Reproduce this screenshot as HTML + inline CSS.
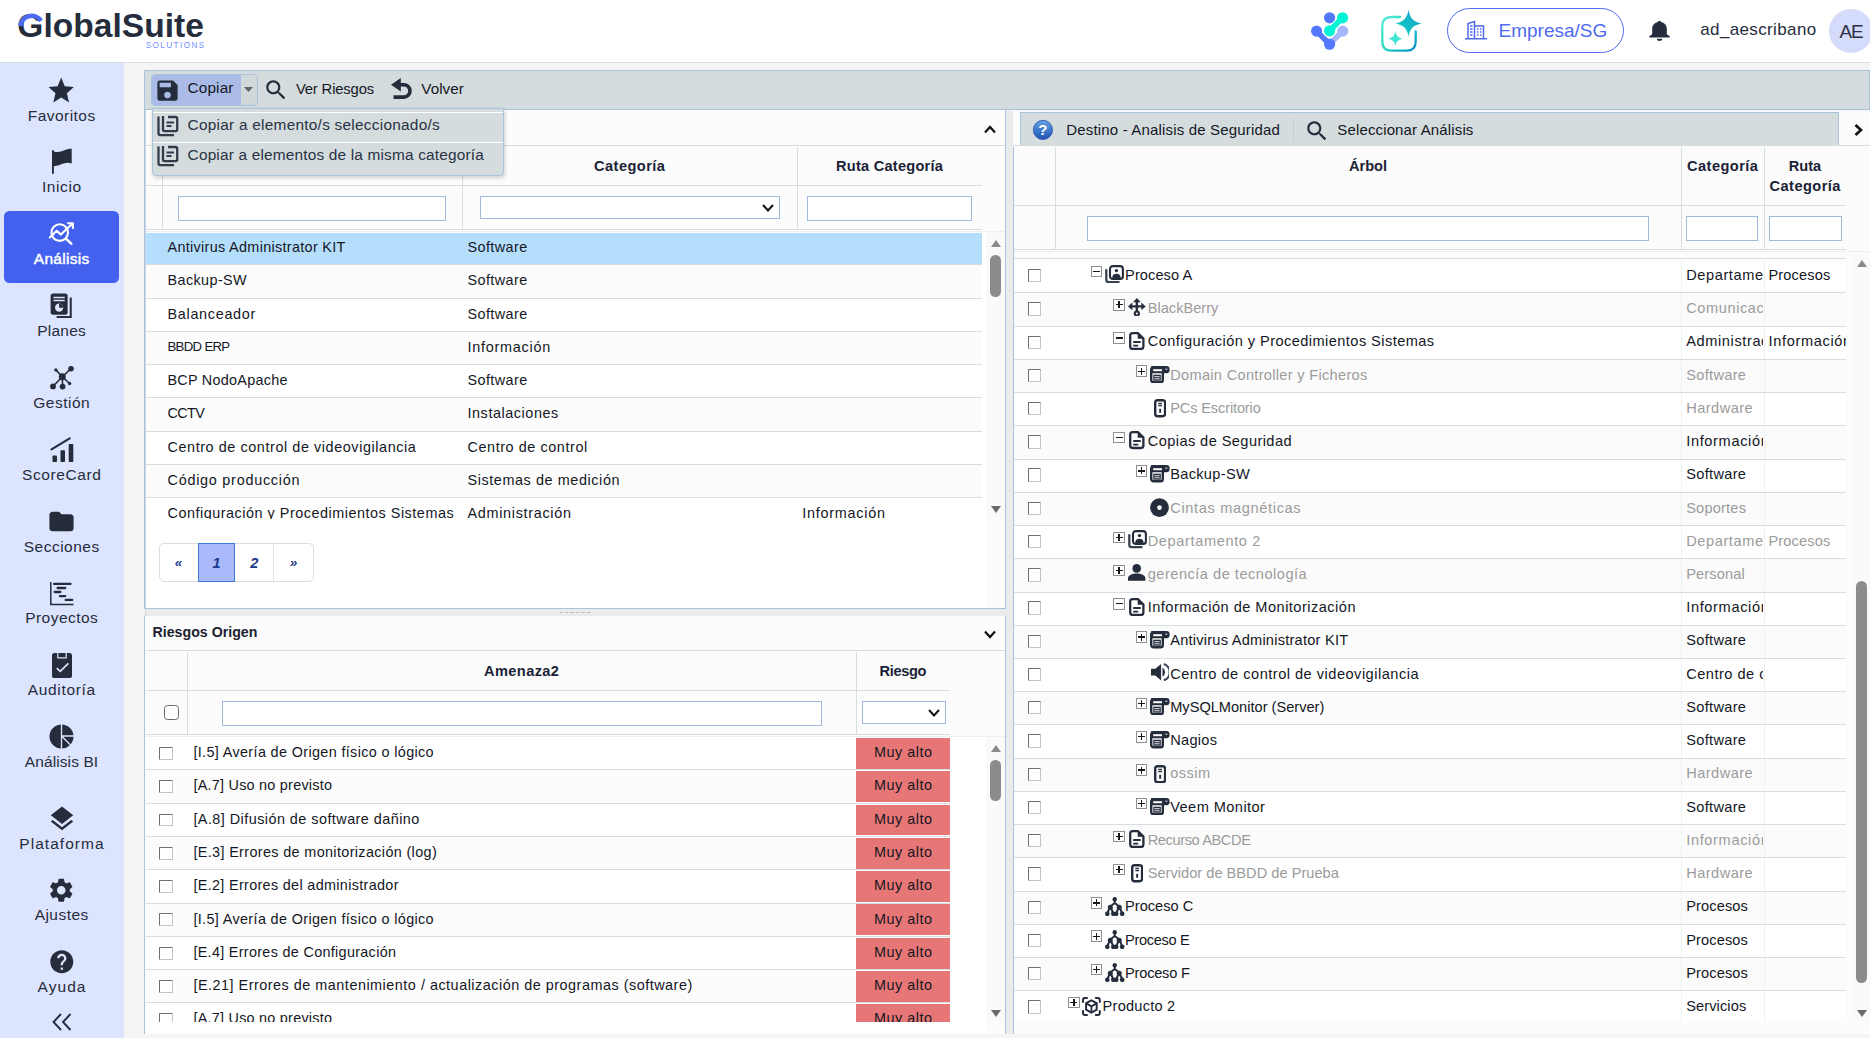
<!DOCTYPE html><html lang="es"><head><meta charset="utf-8"><title>GlobalSuite</title>
<style>
html,body{margin:0;padding:0}
body{width:1870px;height:1038px;overflow:hidden;background:#f5f5f5;font-family:"Liberation Sans",sans-serif;color:#14171f;position:relative}
div,span{box-sizing:border-box}
.abs{position:absolute}
svg{display:block}
#hdr{position:absolute;left:0;top:0;width:1870px;height:63px;background:#fff;border-bottom:1px solid #d5dcdd}
#side{position:absolute;left:0;top:63px;width:124px;height:975px;background:#dde4fd}
.si{position:absolute;left:4px;width:115px;height:72px;border-radius:5.5px}
.si.act{background:#4361ee}
.t{position:absolute;white-space:nowrap;line-height:20px}
.hl{position:absolute;background:#d6dee0;height:1px}
.vl{position:absolute;background:#d6dee0;width:1px}
.inp{position:absolute;background:#fff;border:1px solid #9fbbdc;box-sizing:border-box}
.cb{position:absolute;width:13.5px;height:12.8px;border:1.4px solid;border-color:#707070 #c4c4c4 #c4c4c4 #707070;background:#fff;box-sizing:border-box;border-radius:1px}
.red{position:absolute;background:#e77676}
.ex{position:absolute;width:11.5px;height:11.5px;border:1px solid #8f8f8f;background:#fff;box-sizing:border-box}
.ex i{position:absolute;left:1.3px;top:4.1px;width:7px;height:1.3px;background:#1a1a1a}
.ex b{position:absolute;left:4.1px;top:1.3px;width:1.3px;height:7px;background:#1a1a1a}
</style></head><body>
<div id="hdr">
<div class="t" style="left:17.3px;top:15.99px;font-size:33.5px;letter-spacing:0.04px;color:#252d3d;font-weight:bold;line-height:20px;">GlobalSuite</div>
<svg class="abs" style="left:17.5px;top:12.3px" width="26" height="15" viewBox="0 0 26 15"><path d="M2.300 14A11.300 11.300 0 0 1 23 9" fill="none" stroke="#4d6cf5" stroke-width="4.500"/></svg>
<div class="t" style="left:145.7px;top:35.76px;font-size:8.2px;letter-spacing:1.40px;color:#7590ff;">SOLUTIONS</div>
<svg class="abs" style="left:1308px;top:8px" width="44" height="44" viewBox="1308 8 44 44">
<g stroke-linecap="round" fill="none" stroke-width="5.600">
<path d="M1342.700 31.100L1329.600 44.200" stroke="#a5b7fb"/><circle cx="1342.700" cy="31.100" r="5.600" fill="#a5b7fb" stroke="none"/>
<path d="M1316.600 31.100L1329.600 44.200" stroke="#5478fb"/><circle cx="1316.600" cy="31.100" r="5.600" fill="#5478fb" stroke="none"/><circle cx="1329.600" cy="44.200" r="5.600" fill="#5478fb" stroke="none"/>
<circle cx="1329.600" cy="17.800" r="5.600" fill="#5478fb" stroke="none"/>
<path d="M1342.500 17.800L1329.600 30.800" stroke="#fff" stroke-width="7.500"/>
<circle cx="1329.600" cy="30.800" r="6.800" fill="#fff" stroke="none"/>
<path d="M1342.500 17.800L1329.600 30.800" stroke="#00f5d4"/><circle cx="1342.500" cy="17.800" r="5.600" fill="#00f5d4" stroke="none"/><circle cx="1329.600" cy="30.800" r="5.600" fill="#00f5d4" stroke="none"/>
</g></svg>
<svg class="abs" style="left:1378px;top:6px" width="48" height="50" viewBox="1378 6 48 50">
<defs><linearGradient id="g1" x1="0" y1="0" x2="1" y2="1"><stop offset="0" stop-color="#5feadb"/><stop offset=".5" stop-color="#1fd8c0"/><stop offset="1" stop-color="#0a8bcb"/></linearGradient>
<linearGradient id="g2" x1="0" y1="1" x2="1" y2="0"><stop offset="0" stop-color="#12dcc0"/><stop offset="1" stop-color="#1797cd"/></linearGradient></defs>
<path d="M1400 17H1391.500C1385.500 17 1382.300 20.200 1382.300 26v15.500c0 5.800 3.200 9.200 9.200 9.200h15c6 0 9.200-3.400 9.200-9.200V31.300" fill="none" stroke="url(#g1)" stroke-width="2.300" stroke-linecap="round"/>
<path d="M1408.500 9.700c1.300 8.200 4.600 12 13.100 13.700-8.500 1.700-11.800 5.300-13.100 13.300-1.300-8-4.600-11.600-13.100-13.300 8.500-1.700 11.800-5.500 13.100-13.700z" fill="url(#g2)"/>
<path d="M1395.400 31c.7 4.600 2.600 6.700 7.300 7.700-4.700 1-6.600 3-7.300 7.500-.7-4.500-2.600-6.500-7.300-7.500 4.700-1 6.600-3.100 7.300-7.700z" fill="#43e6d2"/>
</svg>
<div class="abs" style="left:1447px;top:8px;width:177px;height:45px;border:1.5px solid #4f6bf0;border-radius:23px"></div>
<svg class="abs" style="left:1464px;top:19px" width="24" height="22" viewBox="0 0 24 22" fill="none" stroke="#4f6bf0" stroke-width="1.500">
<path d="M4 19V4.500l6.500-2V19M10.500 7h9V19M1 19.800h22"/><path d="M6 7h2.500M6 10h2.500M6 13h2.500M6 16h2.500M13 10h1.500M16 10h1.500M13 13h1.500M16 13h1.500M13 16h1.500M16 16h1.500" stroke-width="1.300"/></svg>
<div class="t" style="left:1498.6px;top:20.72px;font-size:19px;letter-spacing:-0.02px;color:#4f6bf0;">Empresa/SG</div>
<svg class="abs" style="left:1645.500px;top:19.300px" width="27" height="23.500" viewBox="0 0 24 24" preserveAspectRatio="none" fill="#252d3d"><path d="M12 22.500c1.300 0 2.400-.9 2.400-2.300H9.600c0 1.400 1.100 2.300 2.400 2.300zM18.500 15.500v-5.500c0-3.300-1.900-6-4.800-6.700C13.400 2.500 12.800 2 12 2s-1.400.5-1.700 1.300C7.400 4 5.500 6.700 5.500 10v5.500L3 17.500c-.3.300-.2 1.500.5 1.500h17c.7 0 .8-1.200.5-1.500z"/></svg>
<div class="t" style="left:1700.3px;top:20.31px;font-size:17px;letter-spacing:0.36px;color:#252d3d;">ad_aescribano</div>
<div class="abs" style="left:1829px;top:9px;width:44px;height:44px;border-radius:22px;background:#d5dbfb"></div>
<div class="t" style="left:1839.6px;top:21.65px;font-size:18.9px;letter-spacing:-1.30px;color:#2a3142;">AE</div>
</div>
<div id="side">
<div class="abs" style="left:46.3px;top:12.1px"><svg width="30.400" height="31.400" viewBox="0 0 24 24" preserveAspectRatio="none" fill="#252d3d"><path d="M12 17.27L18.18 21l-1.64-7.03L22 9.24l-7.19-.61L12 2 9.19 8.63 2 9.24l5.46 4.73L5.82 21z"/></svg></div>
<div class="t" style="left:0.0px;top:42.53px;font-size:15.5px;letter-spacing:0.46px;color:#252d3d;width:123px;text-align:center;text-indent:0.46px;">Favoritos</div>
<div class="abs" style="left:47.5px;top:85.1px"><svg width="28" height="28" viewBox="47.50 148.13 28 28" fill="#252d3d"><path d="M51.500 150.400V174h1.900v-7.700C57 166 60 164.700 63 163.600c3-1 6-.9 8.200 0V148.900c-3.200-.5-6.200 1-9.200 2.300-3.300 1.300-6.600 1.200-8.600.4v-1.200z"/></svg></div>
<div class="t" style="left:0.0px;top:114.36px;font-size:15.5px;letter-spacing:0.60px;color:#252d3d;width:123px;text-align:center;text-indent:0.60px;">Inicio</div>
<div class="si act" style="top:147.6px"></div>
<div class="abs" style="left:47.0px;top:156.0px"><svg width="28" height="28" viewBox="47.500 220 28 28" fill="none" stroke="#fff" stroke-width="2.100" stroke-linecap="round" stroke-linejoin="round"><circle cx="60.200" cy="233.600" r="8.300"/><path d="M66.500 239.800l5.300 4.800" stroke-width="2.500"/><path d="M50.300 238.600l6.900-6.800 4.200 3.800L72.800 224.800M68.600 224.300h4.800v4.800"/></svg></div>
<div class="t" style="left:0.0px;top:186.19px;font-size:15.5px;letter-spacing:0.28px;color:#fff;width:123px;text-align:center;text-indent:0.28px;-webkit-text-stroke:0.45px #fff;">Análisis</div>
<div class="abs" style="left:46.0px;top:227.8px"><svg width="30" height="30" viewBox="0 0 24 24" fill="#252d3d"><path d="M5.500 2h10c1 0 1.800.8 1.800 1.800v13.400c0 1-.8 1.800-1.800 1.800h-10c-1 0-1.800-.8-1.800-1.800V3.800C3.700 2.800 4.500 2 5.500 2z"/><path d="M19 5.200h1.600v16.300H8.500v-1.600H19z"/><path d="M6 4.500h9v1.200H6zM6 7h9v1.200H6z" fill="#dde4fd"/><circle cx="10.500" cy="13.300" r="3.300" fill="#dde4fd"/><path d="M10.500 13.300V10a3.300 3.300 0 0 1 3.300 3.300z" fill="#252d3d"/></svg></div>
<div class="t" style="left:0.0px;top:258.02px;font-size:15.5px;letter-spacing:0.24px;color:#252d3d;width:123px;text-align:center;text-indent:0.24px;">Planes</div>
<div class="abs" style="left:47.5px;top:300.6px"><svg width="28" height="28" viewBox="47.50 363.62 28 28" fill="#252d3d" stroke="#252d3d" stroke-width="1.600"><path d="M61.800 376.400L70.500 368.300M61.800 376.400L55.400 369.500M61.800 376.400L69.100 383.100M61.800 376.400L62.100 386.200M61.800 376.400L52.500 386" fill="none"/><circle cx="61.800" cy="376.400" r="3.500" stroke="none"/><circle cx="70.500" cy="368.300" r="2.800" stroke="none"/><circle cx="55.400" cy="369.500" r="1.700" stroke="none"/><circle cx="69.100" cy="383.100" r="1.700" stroke="none"/><circle cx="62.100" cy="386.200" r="2.900" stroke="none"/><circle cx="52.500" cy="386" r="2.900" stroke="none"/></svg></div>
<div class="t" style="left:0.0px;top:329.85px;font-size:15.5px;letter-spacing:0.51px;color:#252d3d;width:123px;text-align:center;text-indent:0.51px;">Gestión</div>
<div class="abs" style="left:47.5px;top:373.2px"><svg width="28" height="28" viewBox="47.50 435.45 28 28" fill="#252d3d"><rect x="52" y="455" width="4.500" height="6.500" rx=".8"/><rect x="60" y="449.800" width="4.500" height="11.700" rx=".8"/><rect x="68.200" y="443.400" width="4.600" height="18.100" rx=".8"/><path d="M51 448.800L69.200 437.800" stroke="#252d3d" stroke-width="2.100" stroke-linecap="round"/></svg></div>
<div class="t" style="left:0.0px;top:401.68px;font-size:15.5px;letter-spacing:0.59px;color:#252d3d;width:123px;text-align:center;text-indent:0.59px;">ScoreCard</div>
<div class="abs" style="left:47.0px;top:443.8px"><svg width="29" height="29" viewBox="0 0 24 24" fill="#252d3d" ><path d="M10 4H4.500C3.100 4 2 5.100 2 6.500v11C2 18.900 3.100 20 4.500 20h15c1.400 0 2.500-1.100 2.500-2.500v-9C22 7.100 20.900 6 19.500 6H12z"/></svg></div>
<div class="t" style="left:0.0px;top:473.51px;font-size:15.5px;letter-spacing:0.49px;color:#252d3d;width:123px;text-align:center;text-indent:0.49px;">Secciones</div>
<div class="abs" style="left:47.5px;top:516.1px"><svg width="28" height="28" viewBox="47.50 579.11 28 28" fill="none" stroke="#252d3d"><path d="M50.300 582v22.600h22.700" stroke-width="1.500"/><path d="M53.600 584H70M57.100 588.100h7.600M54.200 592.100h5.700M59.400 596.200h5.300M65.200 600h6.500" stroke-width="2.300" stroke-linecap="round"/></svg></div>
<div class="t" style="left:0.0px;top:545.34px;font-size:15.5px;letter-spacing:0.46px;color:#252d3d;width:123px;text-align:center;text-indent:0.46px;">Proyectos</div>
<div class="abs" style="left:51.5px;top:590.1px"><svg width="20" height="25" viewBox="0 0 20 25"><rect x="0" y="0" width="20" height="25" rx="2.600" fill="#252d3d"/><path d="M5.800 0v4.800h8.400V0" fill="none" stroke="#dde4fd" stroke-width="1.200"/><path d="M4.800 15.200l3.400 3.200 8.200-8" fill="none" stroke="#dde4fd" stroke-width="1.700"/></svg></div>
<div class="t" style="left:0.0px;top:617.17px;font-size:15.5px;letter-spacing:0.68px;color:#252d3d;width:123px;text-align:center;text-indent:0.68px;">Auditoría</div>
<div class="abs" style="left:49.0px;top:661.3px"><svg width="25" height="25" viewBox="0 0 25 25"><circle cx="12.500" cy="12.500" r="12" fill="#252d3d"/><path d="M12.500 0v25M12.500 12h12.500M13 12.500l8.500 8.500" stroke="#dde4fd" stroke-width="1.300" fill="none"/></svg></div>
<div class="t" style="left:0.0px;top:689.00px;font-size:15.5px;letter-spacing:0.09px;color:#252d3d;width:123px;text-align:center;text-indent:0.09px;">Análisis BI</div>
<div class="abs" style="left:46.5px;top:740.6px"><svg width="30" height="30" viewBox="0 0 24 24" fill="#252d3d" ><path d="M11.990 18.540l-7.370-5.730L3 14.070l9 7 9-7-1.630-1.270-7.380 5.740zM12 16l7.360-5.730L21 9l-9-7-9 7 1.630 1.270L12 16z"/></svg></div>
<div class="t" style="left:0.0px;top:770.53px;font-size:15.5px;letter-spacing:1.04px;color:#252d3d;width:123px;text-align:center;text-indent:1.04px;">Plataforma</div>
<div class="abs" style="left:47.2px;top:813.2px"><svg width="28.5" height="28.5" viewBox="0 0 24 24" fill="#252d3d" ><path d="M19.140 12.940c.040-.3.060-.610.060-.940 0-.320-.020-.640-.070-.940l2.030-1.580c.180-.140.230-.410.120-.610l-1.920-3.320c-.120-.220-.370-.290-.590-.220l-2.390.960c-.5-.380-1.030-.7-1.620-.940l-.360-2.540c-.040-.240-.240-.410-.480-.410h-3.840c-.240 0-.430.170-.470.410l-.360 2.540c-.590.240-1.130.570-1.620.940l-2.390-.960c-.220-.080-.470 0-.590.220L2.740 8.870c-.120.210-.080.470.120.610l2.030 1.580c-.050.3-.090.630-.090.940s.020.640.070.940l-2.030 1.580c-.180.140-.230.410-.120.610l1.920 3.320c.120.220.370.290.590.220l2.390-.960c.5.380 1.030.7 1.620.940l.360 2.540c.050.240.240.410.480.410h3.840c.240 0 .440-.170.470-.410l.360-2.540c.590-.240 1.130-.560 1.620-.940l2.390.960c.220.080.470 0 .590-.220l1.920-3.320c.120-.220.070-.470-.120-.610l-2.010-1.580zM12 15.600c-1.980 0-3.600-1.620-3.600-3.600s1.620-3.600 3.600-3.600 3.600 1.620 3.600 3.600-1.620 3.600-3.600 3.600z"/></svg></div>
<div class="t" style="left:0.0px;top:842.36px;font-size:15.5px;letter-spacing:0.48px;color:#252d3d;width:123px;text-align:center;text-indent:0.48px;">Ajustes</div>
<div class="abs" style="left:47.7px;top:885.2px"><svg width="27.6" height="27.6" viewBox="0 0 24 24" fill="#252d3d" ><path d="M12 2C6.480 2 2 6.480 2 12s4.480 10 10 10 10-4.480 10-10S17.520 2 12 2zm1 17h-2v-2h2v2zm2.070-7.750l-.9.920C13.450 12.900 13 13.500 13 15h-2v-.5c0-1.100.450-2.100 1.170-2.830l1.240-1.260c.370-.360.590-.860.590-1.410 0-1.100-.9-2-2-2s-2 .9-2 2H8c0-2.210 1.790-4 4-4s4 1.790 4 4c0 .880-.360 1.680-.930 2.250z"/></svg></div>
<div class="t" style="left:0.0px;top:914.19px;font-size:15.5px;letter-spacing:1.06px;color:#252d3d;width:123px;text-align:center;text-indent:1.06px;">Ayuda</div>
<svg class="abs" style="left:51px;top:950.300px" width="22" height="18" viewBox="0 0 22 18" fill="none" stroke="#252d3d" stroke-width="1.900"><path d="M10 1L2.500 9l7.500 8M19.500 1L12 9l7.500 8"/></svg>
</div>
<div class="abs" style="left:144px;top:70px;width:1726px;height:40px;background:#d4dcde;border:1px solid #a9c3df"></div>
<div class="abs" style="left:151px;top:74px;width:107px;height:32px;background:#d0d8da;border:1px solid #a9c3df;border-radius:4px"></div>
<div class="abs" style="left:152px;top:75px;width:89px;height:30px;background:#abbbe8;border-radius:3px 0 0 3px"></div>
<div class="abs" style="left:153.700px;top:76.600px"><svg width="27" height="27" viewBox="0 0 24 24" fill="#252d3d" ><path d="M17 3H5c-1.110 0-2 .9-2 2v14c0 1.100.890 2 2 2h14c1.100 0 2-.9 2-2V7l-4-4zm-5 16c-1.660 0-3-1.340-3-3s1.340-3 3-3 3 1.340 3 3-1.340 3-3 3zm3-10H5V5h10v4z"/></svg></div>
<div class="t" style="left:187.6px;top:77.70px;font-size:15.3px;letter-spacing:0.15px;">Copiar</div>
<svg class="abs" style="left:244px;top:87px" width="9" height="5" viewBox="0 0 9 5"><path d="M0 0h9L4.500 5z" fill="#5b6470"/></svg>
<div class="abs" style="left:263px;top:76.500px"><svg width="26" height="26" viewBox="0 0 24 24" fill="#252d3d" ><path d="M15.500 14h-.790l-.280-.270C15.410 12.590 16 11.110 16 9.500 16 5.910 13.090 3 9.500 3S3 5.910 3 9.500 5.910 16 9.500 16c1.610 0 3.090-.590 4.230-1.570l.270.280v.790l5 4.990L20.490 19l-4.990-5zm-6 0C7.010 14 5 11.990 5 9.500S7.010 5 9.500 5 14 7.010 14 9.500 11.990 14 9.500 14z"/></svg></div>
<div class="t" style="left:295.9px;top:79.17px;font-size:14.8px;letter-spacing:-0.15px;">Ver Riesgos</div>
<svg class="abs" style="left:390.800px;top:78.400px" width="22" height="22" viewBox="0 0 22 22" fill="none" stroke="#252d3d" stroke-width="3.600"><path d="M7 6.700h5.800a6.200 6.200 0 0 1 0 12.400H2.500"/><path d="M0 6.700L9.800 0v13.400z" fill="#252d3d" stroke="none"/></svg>
<div class="t" style="left:421.3px;top:79.00px;font-size:15.3px;letter-spacing:0.01px;">Volver</div>
<div class="abs" style="left:144px;top:110px;width:862px;height:499px;background:#fcfcfc;border-left:1px solid #a9c3df;border-right:1px solid #a9c3df;border-bottom:1px solid #a9c3df"></div>
<div class="vl" style="left:145px;top:110px;height:924px;background:#cbd8e2"></div>
<div class="abs" style="left:146px;top:232px;width:840px;height:376px;background:#fff"></div>
<div class="abs" style="left:986px;top:232px;width:19px;height:287px;background:#fafafa"></div>
<svg class="abs" style="left:984px;top:124.500px" width="12" height="9" viewBox="0 0 12 9" fill="none" stroke="#111" stroke-width="2.200"><path d="M1 7.500L6 2l5 5.500"/></svg>
<div class="hl" style="left:146px;top:145px;width:859px"></div>
<div class="vl" style="left:162px;top:147px;height:82px"></div>
<div class="vl" style="left:462px;top:147px;height:82px"></div>
<div class="vl" style="left:797px;top:147px;height:82px"></div>
<div class="hl" style="left:146px;top:185px;width:836px"></div>
<div class="hl" style="left:146px;top:229px;width:836px"></div>
<div class="hl" style="left:146px;top:231px;width:859px;background:#edf0f1"></div>
<div class="t" style="left:462.0px;top:155.54px;font-size:14.6px;letter-spacing:0.46px;color:#1b2236;font-weight:bold;width:335px;text-align:center;text-indent:0.46px;">Categoría</div>
<div class="t" style="left:797.0px;top:155.54px;font-size:14.6px;letter-spacing:0.23px;color:#1b2236;font-weight:bold;width:185px;text-align:center;text-indent:0.23px;">Ruta Categoría</div>
<div class="inp" style="left:178px;top:196px;width:268px;height:25px"></div>
<div class="inp" style="left:480px;top:196px;width:300px;height:23px"></div>
<svg class="abs" style="left:762px;top:204px" width="12" height="8" viewBox="0 0 12 8" fill="none" stroke="#111" stroke-width="2"><path d="M1 1l5 5.500L11 1"/></svg>
<div class="inp" style="left:807px;top:196px;width:165px;height:25px"></div>
<div class="abs" style="left:146px;top:232px;width:836px;height:286.70000000000005px;overflow:hidden">
<div class="abs" style="left:0;top:1.17px;width:836px;height:31.23px;background:#b5defd"></div>
<div class="t" style="left:21.5px;top:5.18px;font-size:14.4px;letter-spacing:0.32px;">Antivirus Administrator KIT</div>
<div class="t" style="left:321.5px;top:5.18px;font-size:14.4px;letter-spacing:0.42px;">Software</div>
<div class="hl" style="left:0;top:32.40px;width:836px"></div>
<div class="abs" style="left:0;top:33.40px;width:836px;height:32.23px;background:#fcfcfc"></div>
<div class="t" style="left:21.5px;top:38.41px;font-size:14.4px;letter-spacing:0.40px;">Backup-SW</div>
<div class="t" style="left:321.5px;top:38.41px;font-size:14.4px;letter-spacing:0.42px;">Software</div>
<div class="hl" style="left:0;top:65.63px;width:836px"></div>
<div class="t" style="left:21.5px;top:71.64px;font-size:14.4px;letter-spacing:0.70px;">Balanceador</div>
<div class="t" style="left:321.5px;top:71.64px;font-size:14.4px;letter-spacing:0.42px;">Software</div>
<div class="hl" style="left:0;top:98.86px;width:836px"></div>
<div class="abs" style="left:0;top:99.86px;width:836px;height:32.23px;background:#fcfcfc"></div>
<div class="t" style="left:21.5px;top:105.29px;font-size:13.2px;letter-spacing:-0.68px;">BBDD ERP</div>
<div class="t" style="left:321.5px;top:104.87px;font-size:14.4px;letter-spacing:0.75px;">Información</div>
<div class="hl" style="left:0;top:132.09px;width:836px"></div>
<div class="t" style="left:21.5px;top:138.10px;font-size:14.4px;letter-spacing:0.26px;">BCP NodoApache</div>
<div class="t" style="left:321.5px;top:138.10px;font-size:14.4px;letter-spacing:0.42px;">Software</div>
<div class="hl" style="left:0;top:165.32px;width:836px"></div>
<div class="abs" style="left:0;top:166.32px;width:836px;height:32.23px;background:#fcfcfc"></div>
<div class="t" style="left:21.5px;top:171.33px;font-size:14.4px;letter-spacing:-0.63px;">CCTV</div>
<div class="t" style="left:321.5px;top:171.33px;font-size:14.4px;letter-spacing:0.56px;">Instalaciones</div>
<div class="hl" style="left:0;top:198.55px;width:836px"></div>
<div class="t" style="left:21.5px;top:204.56px;font-size:14.4px;letter-spacing:0.58px;">Centro de control de videovigilancia</div>
<div class="t" style="left:321.5px;top:204.56px;font-size:14.4px;letter-spacing:0.58px;">Centro de control</div>
<div class="hl" style="left:0;top:231.78px;width:836px"></div>
<div class="abs" style="left:0;top:232.78px;width:836px;height:32.23px;background:#fcfcfc"></div>
<div class="t" style="left:21.5px;top:237.79px;font-size:14.4px;letter-spacing:0.75px;">Código producción</div>
<div class="t" style="left:321.5px;top:237.79px;font-size:14.4px;letter-spacing:0.59px;">Sistemas de medición</div>
<div class="hl" style="left:0;top:265.01px;width:836px"></div>
<div class="t" style="left:21.5px;top:271.02px;font-size:14.4px;letter-spacing:0.52px;">Configuración y Procedimientos Sistemas</div>
<div class="t" style="left:321.5px;top:271.02px;font-size:14.4px;letter-spacing:0.70px;">Administración</div>
<div class="t" style="left:656.3px;top:271.02px;font-size:14.4px;letter-spacing:0.75px;">Información</div>
</div>
<svg class="abs" style="left:990.5px;top:240.4px" width="10" height="7" viewBox="0 0 10 7"><path d="M0 7L5 0l5 7z" fill="#8a8a8a"/></svg>
<svg class="abs" style="left:990.5px;top:506px" width="10" height="7" viewBox="0 0 10 7"><path d="M0 0L5 7l5-7z" fill="#6a6a6a"/></svg>
<div class="abs" style="left:990.1px;top:254.9px;width:10.8px;height:42.099999999999994px;border-radius:5.4px;background:#8b8b8b"></div>
<div class="abs" style="left:159px;top:543px;width:155px;height:39px;border:1px solid #dddddd;border-radius:5px;background:#fff"></div>
<div class="abs" style="left:198px;top:543px;width:37px;height:39px;background:#a9b9fb;border:1px solid #3f78d8"></div>
<div class="vl" style="left:273px;top:544px;height:37px;background:#e2e2e2"></div>
<div class="t" style="left:163.5px;top:553.12px;font-size:13.5px;color:#1d3a8a;font-weight:bold;font-style:italic;width:30px;text-align:center;">«</div>
<div class="t" style="left:201.5px;top:552.78px;font-size:14.5px;color:#1d3a8a;font-weight:bold;font-style:italic;width:30px;text-align:center;">1</div>
<div class="t" style="left:239.3px;top:552.78px;font-size:14.5px;color:#1d3a8a;font-weight:bold;font-style:italic;width:30px;text-align:center;">2</div>
<div class="t" style="left:278.6px;top:553.12px;font-size:13.5px;color:#1d3a8a;font-weight:bold;font-style:italic;width:30px;text-align:center;">»</div>
<div class="abs" style="left:146px;top:609px;width:860px;height:7px;background:#ebebeb"></div>
<div class="abs" style="left:560px;top:612px;width:30px;height:0;border-top:1px dashed #b8b8b8"></div>
<div class="abs" style="left:1009px;top:595px;width:0;height:30px;border-left:1px dashed #b9c6d8"></div>
<div class="abs" style="left:144px;top:616px;width:862px;height:418px;background:#fcfcfc;border-left:1px solid #a9c3df;border-right:1px solid #a9c3df"></div>
<div class="t" style="left:152.5px;top:622.28px;font-size:14.2px;color:#1d2230;font-weight:bold;">Riesgos Origen</div>
<svg class="abs" style="left:984px;top:630px" width="12" height="9" viewBox="0 0 12 9" fill="none" stroke="#111" stroke-width="2.200"><path d="M1 1.500L6 7l5-5.500"/></svg>
<div class="hl" style="left:146px;top:650px;width:859px"></div>
<div class="vl" style="left:187px;top:652px;height:83px"></div>
<div class="vl" style="left:856px;top:652px;height:83px"></div>
<div class="hl" style="left:146px;top:690px;width:804px"></div>
<div class="hl" style="left:146px;top:734px;width:804px"></div>
<div class="abs" style="left:146px;top:737px;width:840px;height:297px;background:#fff"></div>
<div class="abs" style="left:986px;top:737px;width:19px;height:285px;background:#fafafa"></div>
<div class="hl" style="left:146px;top:736px;width:859px;background:#edf0f1"></div>
<div class="t" style="left:187.0px;top:660.94px;font-size:14.6px;letter-spacing:0.40px;color:#1b2236;font-weight:bold;width:669px;text-align:center;text-indent:0.40px;">Amenaza2</div>
<div class="t" style="left:856.0px;top:660.94px;font-size:14.6px;letter-spacing:-0.34px;color:#1b2236;font-weight:bold;width:94px;text-align:center;text-indent:-0.34px;">Riesgo</div>
<div class="cb" style="left:164px;top:705px;width:15px;height:15px;border-radius:3.5px;border:1.3px solid #6b6b6b"></div>
<div class="inp" style="left:222px;top:701px;width:600px;height:25px"></div>
<div class="inp" style="left:862px;top:701px;width:84px;height:23px"></div>
<svg class="abs" style="left:928px;top:709px" width="12" height="8" viewBox="0 0 12 8" fill="none" stroke="#111" stroke-width="2"><path d="M1 1l5 5.500L11 1"/></svg>
<div class="abs" style="left:146px;top:737px;width:804px;height:285px;overflow:hidden">
<div class="cb" style="left:13.200px;top:10.00px"></div>
<div class="t" style="left:47.4px;top:5.11px;font-size:14.4px;letter-spacing:0.36px;">[I.5] Avería de Origen físico o lógico</div>
<div class="red" style="left:710px;top:1.00px;width:94px;height:30.89px"></div>
<div class="t" style="left:710.0px;top:5.11px;font-size:14.4px;letter-spacing:0.50px;width:94px;text-align:center;text-indent:0.50px;">Muy alto</div>
<div class="hl" style="left:0;top:32.39px;width:804px"></div>
<div class="abs" style="left:0;top:33.39px;width:710px;height:32.29px;background:#fcfcfc"></div>
<div class="cb" style="left:13.200px;top:43.29px"></div>
<div class="t" style="left:47.4px;top:38.40px;font-size:14.4px;letter-spacing:0.25px;">[A.7] Uso no previsto</div>
<div class="red" style="left:710px;top:34.29px;width:94px;height:30.89px"></div>
<div class="t" style="left:710.0px;top:38.40px;font-size:14.4px;letter-spacing:0.50px;width:94px;text-align:center;text-indent:0.50px;">Muy alto</div>
<div class="hl" style="left:0;top:65.68px;width:804px"></div>
<div class="cb" style="left:13.200px;top:76.58px"></div>
<div class="t" style="left:47.4px;top:71.69px;font-size:14.4px;letter-spacing:0.46px;">[A.8] Difusión de software dañino</div>
<div class="red" style="left:710px;top:67.58px;width:94px;height:30.89px"></div>
<div class="t" style="left:710.0px;top:71.69px;font-size:14.4px;letter-spacing:0.50px;width:94px;text-align:center;text-indent:0.50px;">Muy alto</div>
<div class="hl" style="left:0;top:98.97px;width:804px"></div>
<div class="abs" style="left:0;top:99.97px;width:710px;height:32.29px;background:#fcfcfc"></div>
<div class="cb" style="left:13.200px;top:109.87px"></div>
<div class="t" style="left:47.4px;top:104.98px;font-size:14.4px;letter-spacing:0.36px;">[E.3] Errores de monitorización (log)</div>
<div class="red" style="left:710px;top:100.87px;width:94px;height:30.89px"></div>
<div class="t" style="left:710.0px;top:104.98px;font-size:14.4px;letter-spacing:0.50px;width:94px;text-align:center;text-indent:0.50px;">Muy alto</div>
<div class="hl" style="left:0;top:132.26px;width:804px"></div>
<div class="cb" style="left:13.200px;top:143.16px"></div>
<div class="t" style="left:47.4px;top:138.27px;font-size:14.4px;letter-spacing:0.33px;">[E.2] Errores del administrador</div>
<div class="red" style="left:710px;top:134.16px;width:94px;height:30.89px"></div>
<div class="t" style="left:710.0px;top:138.27px;font-size:14.4px;letter-spacing:0.50px;width:94px;text-align:center;text-indent:0.50px;">Muy alto</div>
<div class="hl" style="left:0;top:165.55px;width:804px"></div>
<div class="abs" style="left:0;top:166.55px;width:710px;height:32.29px;background:#fcfcfc"></div>
<div class="cb" style="left:13.200px;top:176.45px"></div>
<div class="t" style="left:47.4px;top:171.56px;font-size:14.4px;letter-spacing:0.36px;">[I.5] Avería de Origen físico o lógico</div>
<div class="red" style="left:710px;top:167.45px;width:94px;height:30.89px"></div>
<div class="t" style="left:710.0px;top:171.56px;font-size:14.4px;letter-spacing:0.50px;width:94px;text-align:center;text-indent:0.50px;">Muy alto</div>
<div class="hl" style="left:0;top:198.84px;width:804px"></div>
<div class="cb" style="left:13.200px;top:209.74px"></div>
<div class="t" style="left:47.4px;top:204.85px;font-size:14.4px;letter-spacing:0.31px;">[E.4] Errores de Configuración</div>
<div class="red" style="left:710px;top:200.74px;width:94px;height:30.89px"></div>
<div class="t" style="left:710.0px;top:204.85px;font-size:14.4px;letter-spacing:0.50px;width:94px;text-align:center;text-indent:0.50px;">Muy alto</div>
<div class="hl" style="left:0;top:232.13px;width:804px"></div>
<div class="abs" style="left:0;top:233.13px;width:710px;height:32.29px;background:#fcfcfc"></div>
<div class="cb" style="left:13.200px;top:243.03px"></div>
<div class="t" style="left:47.4px;top:238.14px;font-size:14.4px;letter-spacing:0.51px;">[E.21] Errores de mantenimiento / actualización de programas (software)</div>
<div class="red" style="left:710px;top:234.03px;width:94px;height:30.89px"></div>
<div class="t" style="left:710.0px;top:238.14px;font-size:14.4px;letter-spacing:0.50px;width:94px;text-align:center;text-indent:0.50px;">Muy alto</div>
<div class="hl" style="left:0;top:265.42px;width:804px"></div>
<div class="cb" style="left:13.200px;top:276.32px"></div>
<div class="t" style="left:47.4px;top:271.43px;font-size:14.4px;letter-spacing:0.25px;">[A.7] Uso no previsto</div>
<div class="red" style="left:710px;top:267.32px;width:94px;height:30.89px"></div>
<div class="t" style="left:710.0px;top:271.43px;font-size:14.4px;letter-spacing:0.50px;width:94px;text-align:center;text-indent:0.50px;">Muy alto</div>
</div>
<svg class="abs" style="left:990.5px;top:745.4px" width="10" height="7" viewBox="0 0 10 7"><path d="M0 7L5 0l5 7z" fill="#8a8a8a"/></svg>
<svg class="abs" style="left:990.5px;top:1009.5px" width="10" height="7" viewBox="0 0 10 7"><path d="M0 0L5 7l5-7z" fill="#6a6a6a"/></svg>
<div class="abs" style="left:990.1px;top:760px;width:10.8px;height:41px;border-radius:5.4px;background:#8b8b8b"></div>
<div class="abs" style="left:1006px;top:111px;width:7px;height:923px;background:#ebebeb"></div>
<div class="abs" style="left:1013px;top:111px;width:858px;height:923px;background:#fcfcfc"></div>
<div class="vl" style="left:1013px;top:147px;height:887px;background:#a9c3df"></div>
<div class="abs" style="left:1020px;top:112px;width:819px;height:34px;background:#d4dcde;border:1px solid #a9c3df;border-bottom:none"></div>
<div class="hl" style="left:1013px;top:145px;width:857px"></div>
<svg class="abs" style="left:1032px;top:119px" width="22" height="22" viewBox="0 0 22 22"><defs><linearGradient id="qg" x1="0" y1="0" x2="0" y2="1"><stop offset="0" stop-color="#6aa3e0"/><stop offset=".55" stop-color="#3b78cc"/><stop offset="1" stop-color="#2450b4"/></linearGradient></defs><circle cx="10.900" cy="10.900" r="9.600" fill="url(#qg)" stroke="#2a4fae" stroke-width=".8"/><text x="10.900" y="16.300" text-anchor="middle" font-family="Liberation Sans, sans-serif" font-weight="bold" font-size="15" fill="#fff">?</text></svg>
<div class="t" style="left:1066.3px;top:119.80px;font-size:15px;letter-spacing:0.17px;">Destino - Analisis de Seguridad</div>
<div class="vl" style="left:1293px;top:118px;height:24px;background:#c3cfdc"></div>
<div class="abs" style="left:1304px;top:117.500px"><svg width="26" height="26" viewBox="0 0 24 24" fill="#252d3d" ><path d="M15.500 14h-.790l-.280-.270C15.410 12.590 16 11.110 16 9.500 16 5.910 13.090 3 9.500 3S3 5.910 3 9.500 5.910 16 9.500 16c1.610 0 3.090-.590 4.230-1.570l.270.280v.790l5 4.990L20.490 19l-4.990-5zm-6 0C7.010 14 5 11.990 5 9.500S7.010 5 9.500 5 14 7.010 14 9.500 11.990 14 9.500 14z"/></svg></div>
<div class="t" style="left:1337.3px;top:119.80px;font-size:15px;letter-spacing:0.14px;">Seleccionar Análisis</div>
<svg class="abs" style="left:1853.500px;top:123.700px" width="9" height="12" viewBox="0 0 9 12" fill="none" stroke="#111" stroke-width="2.600"><path d="M1.500 1L7 6l-5.500 5"/></svg>
<div class="vl" style="left:1055px;top:147px;height:102px"></div>
<div class="vl" style="left:1681px;top:147px;height:102px"></div>
<div class="vl" style="left:1764px;top:147px;height:102px"></div>
<div class="hl" style="left:1014px;top:205px;width:832px"></div>
<div class="hl" style="left:1014px;top:249px;width:832px"></div>
<div class="hl" style="left:1014px;top:251px;width:856px;background:#edf0f1"></div>
<div class="t" style="left:1055.0px;top:155.54px;font-size:14.6px;letter-spacing:-0.03px;color:#1b2236;font-weight:bold;width:626px;text-align:center;text-indent:-0.03px;">Árbol</div>
<div class="t" style="left:1681.0px;top:155.54px;font-size:14.6px;letter-spacing:0.46px;color:#1b2236;font-weight:bold;width:83px;text-align:center;text-indent:0.46px;">Categoría</div>
<div class="t" style="left:1764.0px;top:155.54px;font-size:14.6px;letter-spacing:0.02px;color:#1b2236;font-weight:bold;width:82px;text-align:center;text-indent:0.02px;">Ruta</div>
<div class="t" style="left:1764.0px;top:175.54px;font-size:14.6px;letter-spacing:0.46px;color:#1b2236;font-weight:bold;width:82px;text-align:center;text-indent:0.46px;">Categoría</div>
<div class="inp" style="left:1087px;top:216px;width:562px;height:25px"></div>
<div class="inp" style="left:1686px;top:216px;width:72px;height:25px"></div>
<div class="inp" style="left:1769px;top:216px;width:73px;height:25px"></div>
<div class="hl" style="left:1014px;top:258px;width:832px"></div>
<div class="abs" style="left:1014px;top:259px;width:832px;height:763px;overflow:hidden">
<div class="abs" style="left:0;top:1.17px;width:832px;height:32.23px;background:#fff"></div>
<div class="cb" style="left:13.7px;top:10.07px;width:13.6px;height:13.4px"></div>
<div class="ex" style="left:76.7px;top:6.77px"><i></i></div>
<svg class="abs" style="left:91.4px;top:5.57px" width="19" height="18.5" viewBox="0 0 19 18.5"><path d="M1.300 4.300v10.500c0 1.400.9 2.400 2.400 2.400H14.500" fill="none" stroke="#3a4252" stroke-width="2.300"/><rect x="5" y="1.100" width="12.900" height="12.900" rx="2.800" fill="none" stroke="#252d3d" stroke-width="2.100"/><circle cx="11.450" cy="5.600" r="1.700" fill="#252d3d"/><path d="M7.300 12.200c0-2.400 2-3.500 4.150-3.500s4.150 1.100 4.150 3.500v.8H7.300z" fill="#252d3d"/></svg>
<div class="t" style="left:111.1px;top:5.91px;font-size:14.6px;letter-spacing:0.07px;">Proceso A</div>
<div class="abs" style="left:668px;top:1.17px;width:81px;height:32.23px;overflow:hidden">
<div class="t" style="left:4.2px;top:4.74px;font-size:14.6px;letter-spacing:0.58px;">Departamento</div>
</div>
<div class="abs" style="left:751px;top:1.17px;width:81px;height:32.23px;overflow:hidden">
<div class="t" style="left:3.5px;top:4.74px;font-size:14.6px;letter-spacing:0.12px;">Procesos</div>
</div>
<div class="vl" style="left:667px;top:1.17px;height:32.23px;background:#eef1f2"></div>
<div class="vl" style="left:750px;top:1.17px;height:32.23px;background:#eef1f2"></div>
<div class="hl" style="left:0;top:33.40px;width:832px"></div>
<div class="abs" style="left:0;top:34.40px;width:832px;height:32.23px;background:#fbfbfb"></div>
<div class="cb" style="left:13.7px;top:43.30px;width:13.6px;height:13.4px"></div>
<div class="ex" style="left:99.3px;top:40.00px"><i></i><b></b></div>
<svg class="abs" style="left:114.2px;top:38.60px" width="17.7" height="18.7" viewBox="0 0 17.7 18.7"><path d="M8.850 0l3.900 4.200h-2.700v3h3.300V4.600l4.350 3.800-4.350 3.800V9.600h-3.300v3a3.200 3.200 0 1 1-2.400 0v-3h-3.300v2.600L0 8.400l4.350-3.800v2.600h3.300v-3h-2.700z" fill="#252d3d"/><circle cx="8.850" cy="15.600" r="1" fill="#fcfcfc"/></svg>
<div class="t" style="left:133.7px;top:39.14px;font-size:14.6px;letter-spacing:0.02px;color:#9b9b9b;">BlackBerry</div>
<div class="abs" style="left:668px;top:34.40px;width:81px;height:32.23px;overflow:hidden">
<div class="t" style="left:4.2px;top:4.74px;font-size:14.6px;letter-spacing:0.58px;color:#9b9b9b;">Comunicaciones</div>
</div>
<div class="vl" style="left:667px;top:34.40px;height:32.23px;background:#eef1f2"></div>
<div class="vl" style="left:750px;top:34.40px;height:32.23px;background:#eef1f2"></div>
<div class="hl" style="left:0;top:66.64px;width:832px"></div>
<div class="abs" style="left:0;top:67.64px;width:832px;height:32.23px;background:#fff"></div>
<div class="cb" style="left:13.7px;top:76.54px;width:13.6px;height:13.4px"></div>
<div class="ex" style="left:99.3px;top:73.24px"><i></i></div>
<svg class="abs" style="left:115.0px;top:72.64px" width="15.6" height="18.2" viewBox="0 0 15.6 18.2"><path d="M3.600 1.200h5.300l5.500 5.300v8.100c0 1.500-.9 2.400-2.400 2.400H3.600c-1.500 0-2.400-.9-2.400-2.400V3.600c0-1.500.9-2.400 2.400-2.400z" fill="none" stroke="#252d3d" stroke-width="2.300"/><path d="M8.700 1.400v5.300H14z" fill="#252d3d"/><path d="M4.200 10h7.500M4.200 13.600h5" stroke="#252d3d" stroke-width="1.900" fill="none"/></svg>
<div class="t" style="left:133.7px;top:72.38px;font-size:14.6px;letter-spacing:0.43px;">Configuración y Procedimientos Sistemas</div>
<div class="abs" style="left:668px;top:67.64px;width:81px;height:32.23px;overflow:hidden">
<div class="t" style="left:4.2px;top:4.74px;font-size:14.6px;letter-spacing:0.60px;">Administración</div>
</div>
<div class="abs" style="left:751px;top:67.64px;width:81px;height:32.23px;overflow:hidden">
<div class="t" style="left:3.5px;top:4.74px;font-size:14.6px;letter-spacing:0.64px;">Información</div>
</div>
<div class="vl" style="left:667px;top:67.64px;height:32.23px;background:#eef1f2"></div>
<div class="vl" style="left:750px;top:67.64px;height:32.23px;background:#eef1f2"></div>
<div class="hl" style="left:0;top:99.87px;width:832px"></div>
<div class="abs" style="left:0;top:100.87px;width:832px;height:32.23px;background:#fbfbfb"></div>
<div class="cb" style="left:13.7px;top:109.77px;width:13.6px;height:13.4px"></div>
<div class="ex" style="left:121.8px;top:106.47px"><i></i><b></b></div>
<svg class="abs" style="left:136.1px;top:106.57px" width="19.6" height="17.5" viewBox="0 0 19.6 17.5"><rect x="1.200" y="1.200" width="11.600" height="15.100" rx="2.300" fill="none" stroke="#252d3d" stroke-width="2.400"/><path d="M1.200 0h15.400c1.800 0 3 1.200 3 3v1.300c0 1.800-1.200 3-3 3H1.200z" fill="#252d3d"/><rect x="3.200" y="3.200" width="8.800" height="2" fill="#fcfcfc"/><rect x="15" y="2.400" width="2.600" height="1.500" rx=".6" fill="#9aa0aa"/><rect x="3.300" y="8.700" width="7.500" height="6" fill="#252d3d"/><path d="M4.400 10.700h5.300M4.400 12.800h5.300" stroke="#fcfcfc" stroke-width=".9"/></svg>
<div class="t" style="left:156.2px;top:105.61px;font-size:14.6px;letter-spacing:0.30px;color:#9b9b9b;">Domain Controller y Ficheros</div>
<div class="abs" style="left:668px;top:100.87px;width:81px;height:32.23px;overflow:hidden">
<div class="t" style="left:4.2px;top:4.74px;font-size:14.6px;letter-spacing:0.31px;color:#9b9b9b;">Software</div>
</div>
<div class="vl" style="left:667px;top:100.87px;height:32.23px;background:#eef1f2"></div>
<div class="vl" style="left:750px;top:100.87px;height:32.23px;background:#eef1f2"></div>
<div class="hl" style="left:0;top:133.10px;width:832px"></div>
<div class="abs" style="left:0;top:134.10px;width:832px;height:32.23px;background:#fff"></div>
<div class="cb" style="left:13.7px;top:143.00px;width:13.6px;height:13.4px"></div>
<svg class="abs" style="left:139.5px;top:140.20px" width="12.3" height="18.4" viewBox="0 0 12.3 18.4"><rect x="1.200" y="1.200" width="9.900" height="16" rx="2.400" fill="none" stroke="#252d3d" stroke-width="2.400"/><path d="M4.300 4.500h3.700M4.300 6.700h3.700" stroke="#252d3d" stroke-width="1.300"/><path d="M6.150 9.800v4" stroke="#252d3d" stroke-width="1.900"/></svg>
<div class="t" style="left:156.2px;top:138.84px;font-size:14.6px;letter-spacing:-0.14px;color:#9b9b9b;">PCs Escritorio</div>
<div class="abs" style="left:668px;top:134.10px;width:81px;height:32.23px;overflow:hidden">
<div class="t" style="left:4.2px;top:4.74px;font-size:14.6px;letter-spacing:0.47px;color:#9b9b9b;">Hardware</div>
</div>
<div class="vl" style="left:667px;top:134.10px;height:32.23px;background:#eef1f2"></div>
<div class="vl" style="left:750px;top:134.10px;height:32.23px;background:#eef1f2"></div>
<div class="hl" style="left:0;top:166.34px;width:832px"></div>
<div class="abs" style="left:0;top:167.34px;width:832px;height:32.23px;background:#fbfbfb"></div>
<div class="cb" style="left:13.7px;top:176.24px;width:13.6px;height:13.4px"></div>
<div class="ex" style="left:99.3px;top:172.94px"><i></i></div>
<svg class="abs" style="left:115.0px;top:172.34px" width="15.6" height="18.2" viewBox="0 0 15.6 18.2"><path d="M3.600 1.200h5.300l5.500 5.300v8.100c0 1.500-.9 2.400-2.400 2.400H3.600c-1.500 0-2.400-.9-2.400-2.400V3.600c0-1.500.9-2.400 2.400-2.400z" fill="none" stroke="#252d3d" stroke-width="2.300"/><path d="M8.700 1.400v5.300H14z" fill="#252d3d"/><path d="M4.200 10h7.500M4.200 13.600h5" stroke="#252d3d" stroke-width="1.900" fill="none"/></svg>
<div class="t" style="left:133.7px;top:172.08px;font-size:14.6px;letter-spacing:0.42px;">Copias de Seguridad</div>
<div class="abs" style="left:668px;top:167.34px;width:81px;height:32.23px;overflow:hidden">
<div class="t" style="left:4.2px;top:4.74px;font-size:14.6px;letter-spacing:0.64px;">Información</div>
</div>
<div class="vl" style="left:667px;top:167.34px;height:32.23px;background:#eef1f2"></div>
<div class="vl" style="left:750px;top:167.34px;height:32.23px;background:#eef1f2"></div>
<div class="hl" style="left:0;top:199.57px;width:832px"></div>
<div class="abs" style="left:0;top:200.57px;width:832px;height:32.23px;background:#fff"></div>
<div class="cb" style="left:13.7px;top:209.47px;width:13.6px;height:13.4px"></div>
<div class="ex" style="left:121.8px;top:206.17px"><i></i><b></b></div>
<svg class="abs" style="left:136.1px;top:206.27px" width="19.6" height="17.5" viewBox="0 0 19.6 17.5"><rect x="1.200" y="1.200" width="11.600" height="15.100" rx="2.300" fill="none" stroke="#252d3d" stroke-width="2.400"/><path d="M1.200 0h15.400c1.800 0 3 1.200 3 3v1.300c0 1.800-1.200 3-3 3H1.200z" fill="#252d3d"/><rect x="3.200" y="3.200" width="8.800" height="2" fill="#fcfcfc"/><rect x="15" y="2.400" width="2.600" height="1.500" rx=".6" fill="#9aa0aa"/><rect x="3.300" y="8.700" width="7.500" height="6" fill="#252d3d"/><path d="M4.400 10.700h5.300M4.400 12.800h5.300" stroke="#fcfcfc" stroke-width=".9"/></svg>
<div class="t" style="left:156.2px;top:205.31px;font-size:14.6px;letter-spacing:0.31px;">Backup-SW</div>
<div class="abs" style="left:668px;top:200.57px;width:81px;height:32.23px;overflow:hidden">
<div class="t" style="left:4.2px;top:4.74px;font-size:14.6px;letter-spacing:0.31px;">Software</div>
</div>
<div class="vl" style="left:667px;top:200.57px;height:32.23px;background:#eef1f2"></div>
<div class="vl" style="left:750px;top:200.57px;height:32.23px;background:#eef1f2"></div>
<div class="hl" style="left:0;top:232.80px;width:832px"></div>
<div class="abs" style="left:0;top:233.80px;width:832px;height:32.23px;background:#fbfbfb"></div>
<div class="cb" style="left:13.7px;top:242.70px;width:13.6px;height:13.4px"></div>
<svg class="abs" style="left:136.2px;top:238.80px" width="19" height="19.2" viewBox="0 0 19 19.2"><circle cx="9.500" cy="9.600" r="9.400" fill="#252d3d"/><circle cx="9.500" cy="9.600" r="2.300" fill="#fff"/></svg>
<div class="t" style="left:156.2px;top:238.54px;font-size:14.6px;letter-spacing:0.65px;color:#9b9b9b;">Cintas magnéticas</div>
<div class="abs" style="left:668px;top:233.80px;width:81px;height:32.23px;overflow:hidden">
<div class="t" style="left:4.2px;top:4.74px;font-size:14.6px;letter-spacing:0.19px;color:#9b9b9b;">Soportes</div>
</div>
<div class="vl" style="left:667px;top:233.80px;height:32.23px;background:#eef1f2"></div>
<div class="vl" style="left:750px;top:233.80px;height:32.23px;background:#eef1f2"></div>
<div class="hl" style="left:0;top:266.03px;width:832px"></div>
<div class="abs" style="left:0;top:267.03px;width:832px;height:32.23px;background:#fff"></div>
<div class="cb" style="left:13.7px;top:275.93px;width:13.6px;height:13.4px"></div>
<div class="ex" style="left:99.3px;top:272.63px"><i></i><b></b></div>
<svg class="abs" style="left:114.0px;top:271.43px" width="19" height="18.5" viewBox="0 0 19 18.5"><path d="M1.300 4.300v10.500c0 1.400.9 2.400 2.400 2.400H14.500" fill="none" stroke="#3a4252" stroke-width="2.300"/><rect x="5" y="1.100" width="12.900" height="12.900" rx="2.800" fill="none" stroke="#252d3d" stroke-width="2.100"/><circle cx="11.450" cy="5.600" r="1.700" fill="#252d3d"/><path d="M7.300 12.200c0-2.400 2-3.500 4.150-3.500s4.150 1.100 4.150 3.500v.8H7.300z" fill="#252d3d"/></svg>
<div class="t" style="left:133.7px;top:271.78px;font-size:14.6px;letter-spacing:0.62px;color:#9b9b9b;">Departamento 2</div>
<div class="abs" style="left:668px;top:267.03px;width:81px;height:32.23px;overflow:hidden">
<div class="t" style="left:4.2px;top:4.74px;font-size:14.6px;letter-spacing:0.58px;color:#9b9b9b;">Departamento</div>
</div>
<div class="abs" style="left:751px;top:267.03px;width:81px;height:32.23px;overflow:hidden">
<div class="t" style="left:3.5px;top:4.74px;font-size:14.6px;letter-spacing:0.12px;color:#9b9b9b;">Procesos</div>
</div>
<div class="vl" style="left:667px;top:267.03px;height:32.23px;background:#eef1f2"></div>
<div class="vl" style="left:750px;top:267.03px;height:32.23px;background:#eef1f2"></div>
<div class="hl" style="left:0;top:299.27px;width:832px"></div>
<div class="abs" style="left:0;top:300.27px;width:832px;height:32.23px;background:#fbfbfb"></div>
<div class="cb" style="left:13.7px;top:309.17px;width:13.6px;height:13.4px"></div>
<div class="ex" style="left:99.3px;top:305.87px"><i></i><b></b></div>
<svg class="abs" style="left:114.2px;top:305.17px" width="17.4" height="16.8" viewBox="0 0 17.4 16.8"><circle cx="8.700" cy="4.400" r="4.300" fill="#252d3d"/><path d="M0 16.800v-2.300c0-3 4.300-4.900 8.700-4.900s8.700 1.900 8.700 4.900v2.300z" fill="#252d3d"/></svg>
<div class="t" style="left:133.7px;top:305.01px;font-size:14.6px;letter-spacing:0.50px;color:#9b9b9b;">gerencía de tecnología</div>
<div class="abs" style="left:668px;top:300.27px;width:81px;height:32.23px;overflow:hidden">
<div class="t" style="left:4.2px;top:4.74px;font-size:14.6px;letter-spacing:0.12px;color:#9b9b9b;">Personal</div>
</div>
<div class="vl" style="left:667px;top:300.27px;height:32.23px;background:#eef1f2"></div>
<div class="vl" style="left:750px;top:300.27px;height:32.23px;background:#eef1f2"></div>
<div class="hl" style="left:0;top:332.50px;width:832px"></div>
<div class="abs" style="left:0;top:333.50px;width:832px;height:32.23px;background:#fff"></div>
<div class="cb" style="left:13.7px;top:342.40px;width:13.6px;height:13.4px"></div>
<div class="ex" style="left:99.3px;top:339.10px"><i></i></div>
<svg class="abs" style="left:115.0px;top:338.50px" width="15.6" height="18.2" viewBox="0 0 15.6 18.2"><path d="M3.600 1.200h5.300l5.500 5.300v8.100c0 1.500-.9 2.400-2.400 2.400H3.600c-1.500 0-2.400-.9-2.400-2.400V3.600c0-1.500.9-2.400 2.400-2.400z" fill="none" stroke="#252d3d" stroke-width="2.300"/><path d="M8.700 1.400v5.300H14z" fill="#252d3d"/><path d="M4.200 10h7.500M4.200 13.600h5" stroke="#252d3d" stroke-width="1.900" fill="none"/></svg>
<div class="t" style="left:133.7px;top:338.24px;font-size:14.6px;letter-spacing:0.47px;">Información de Monitorización</div>
<div class="abs" style="left:668px;top:333.50px;width:81px;height:32.23px;overflow:hidden">
<div class="t" style="left:4.2px;top:4.74px;font-size:14.6px;letter-spacing:0.64px;">Información</div>
</div>
<div class="vl" style="left:667px;top:333.50px;height:32.23px;background:#eef1f2"></div>
<div class="vl" style="left:750px;top:333.50px;height:32.23px;background:#eef1f2"></div>
<div class="hl" style="left:0;top:365.73px;width:832px"></div>
<div class="abs" style="left:0;top:366.73px;width:832px;height:32.23px;background:#fbfbfb"></div>
<div class="cb" style="left:13.7px;top:375.63px;width:13.6px;height:13.4px"></div>
<div class="ex" style="left:121.8px;top:372.33px"><i></i><b></b></div>
<svg class="abs" style="left:136.1px;top:372.43px" width="19.6" height="17.5" viewBox="0 0 19.6 17.5"><rect x="1.200" y="1.200" width="11.600" height="15.100" rx="2.300" fill="none" stroke="#252d3d" stroke-width="2.400"/><path d="M1.200 0h15.400c1.800 0 3 1.200 3 3v1.300c0 1.800-1.200 3-3 3H1.200z" fill="#252d3d"/><rect x="3.200" y="3.200" width="8.800" height="2" fill="#fcfcfc"/><rect x="15" y="2.400" width="2.600" height="1.500" rx=".6" fill="#9aa0aa"/><rect x="3.300" y="8.700" width="7.500" height="6" fill="#252d3d"/><path d="M4.400 10.700h5.300M4.400 12.800h5.300" stroke="#fcfcfc" stroke-width=".9"/></svg>
<div class="t" style="left:156.2px;top:371.47px;font-size:14.6px;letter-spacing:0.23px;">Antivirus Administrator KIT</div>
<div class="abs" style="left:668px;top:366.73px;width:81px;height:32.23px;overflow:hidden">
<div class="t" style="left:4.2px;top:4.74px;font-size:14.6px;letter-spacing:0.31px;">Software</div>
</div>
<div class="vl" style="left:667px;top:366.73px;height:32.23px;background:#eef1f2"></div>
<div class="vl" style="left:750px;top:366.73px;height:32.23px;background:#eef1f2"></div>
<div class="hl" style="left:0;top:398.97px;width:832px"></div>
<div class="abs" style="left:0;top:399.97px;width:832px;height:32.23px;background:#fff"></div>
<div class="cb" style="left:13.7px;top:408.87px;width:13.6px;height:13.4px"></div>
<svg class="abs" style="left:136.6px;top:404.17px" width="18.3" height="18.3" viewBox="0 0 18.3 18.3"><path d="M0 5.800h4.300l5.800-4.900v16.500l-5.800-4.900H0z" fill="#252d3d"/><path d="M11.500 4.500a5.600 5.600 0 0 1 0 9.300z" fill="#252d3d"/><path d="M12.800 1a8.600 8.600 0 0 1 0 16.300" fill="none" stroke="#3a4252" stroke-width="2"/></svg>
<div class="t" style="left:156.2px;top:404.71px;font-size:14.6px;letter-spacing:0.49px;">Centro de control de videovigilancia</div>
<div class="abs" style="left:668px;top:399.97px;width:81px;height:32.23px;overflow:hidden">
<div class="t" style="left:4.2px;top:4.74px;font-size:14.6px;letter-spacing:0.48px;">Centro de control</div>
</div>
<div class="vl" style="left:667px;top:399.97px;height:32.23px;background:#eef1f2"></div>
<div class="vl" style="left:750px;top:399.97px;height:32.23px;background:#eef1f2"></div>
<div class="hl" style="left:0;top:432.20px;width:832px"></div>
<div class="abs" style="left:0;top:433.20px;width:832px;height:32.23px;background:#fbfbfb"></div>
<div class="cb" style="left:13.7px;top:442.10px;width:13.6px;height:13.4px"></div>
<div class="ex" style="left:121.8px;top:438.80px"><i></i><b></b></div>
<svg class="abs" style="left:136.1px;top:438.90px" width="19.6" height="17.5" viewBox="0 0 19.6 17.5"><rect x="1.200" y="1.200" width="11.600" height="15.100" rx="2.300" fill="none" stroke="#252d3d" stroke-width="2.400"/><path d="M1.200 0h15.400c1.800 0 3 1.200 3 3v1.300c0 1.800-1.200 3-3 3H1.200z" fill="#252d3d"/><rect x="3.200" y="3.200" width="8.800" height="2" fill="#fcfcfc"/><rect x="15" y="2.400" width="2.600" height="1.500" rx=".6" fill="#9aa0aa"/><rect x="3.300" y="8.700" width="7.500" height="6" fill="#252d3d"/><path d="M4.400 10.700h5.300M4.400 12.800h5.300" stroke="#fcfcfc" stroke-width=".9"/></svg>
<div class="t" style="left:156.2px;top:437.94px;font-size:14.6px;">MySQLMonitor (Server)</div>
<div class="abs" style="left:668px;top:433.20px;width:81px;height:32.23px;overflow:hidden">
<div class="t" style="left:4.2px;top:4.74px;font-size:14.6px;letter-spacing:0.31px;">Software</div>
</div>
<div class="vl" style="left:667px;top:433.20px;height:32.23px;background:#eef1f2"></div>
<div class="vl" style="left:750px;top:433.20px;height:32.23px;background:#eef1f2"></div>
<div class="hl" style="left:0;top:465.43px;width:832px"></div>
<div class="abs" style="left:0;top:466.43px;width:832px;height:32.23px;background:#fff"></div>
<div class="cb" style="left:13.7px;top:475.33px;width:13.6px;height:13.4px"></div>
<div class="ex" style="left:121.8px;top:472.03px"><i></i><b></b></div>
<svg class="abs" style="left:136.1px;top:472.13px" width="19.6" height="17.5" viewBox="0 0 19.6 17.5"><rect x="1.200" y="1.200" width="11.600" height="15.100" rx="2.300" fill="none" stroke="#252d3d" stroke-width="2.400"/><path d="M1.200 0h15.400c1.800 0 3 1.200 3 3v1.300c0 1.800-1.200 3-3 3H1.200z" fill="#252d3d"/><rect x="3.200" y="3.200" width="8.800" height="2" fill="#fcfcfc"/><rect x="15" y="2.400" width="2.600" height="1.500" rx=".6" fill="#9aa0aa"/><rect x="3.300" y="8.700" width="7.500" height="6" fill="#252d3d"/><path d="M4.400 10.700h5.300M4.400 12.800h5.300" stroke="#fcfcfc" stroke-width=".9"/></svg>
<div class="t" style="left:156.2px;top:471.17px;font-size:14.6px;letter-spacing:0.27px;">Nagios</div>
<div class="abs" style="left:668px;top:466.43px;width:81px;height:32.23px;overflow:hidden">
<div class="t" style="left:4.2px;top:4.74px;font-size:14.6px;letter-spacing:0.31px;">Software</div>
</div>
<div class="vl" style="left:667px;top:466.43px;height:32.23px;background:#eef1f2"></div>
<div class="vl" style="left:750px;top:466.43px;height:32.23px;background:#eef1f2"></div>
<div class="hl" style="left:0;top:498.66px;width:832px"></div>
<div class="abs" style="left:0;top:499.66px;width:832px;height:32.23px;background:#fbfbfb"></div>
<div class="cb" style="left:13.7px;top:508.56px;width:13.6px;height:13.4px"></div>
<div class="ex" style="left:121.8px;top:505.26px"><i></i><b></b></div>
<svg class="abs" style="left:139.5px;top:505.76px" width="12.3" height="18.4" viewBox="0 0 12.3 18.4"><rect x="1.200" y="1.200" width="9.900" height="16" rx="2.400" fill="none" stroke="#252d3d" stroke-width="2.400"/><path d="M4.300 4.500h3.700M4.300 6.700h3.700" stroke="#252d3d" stroke-width="1.300"/><path d="M6.150 9.800v4" stroke="#252d3d" stroke-width="1.900"/></svg>
<div class="t" style="left:156.2px;top:504.41px;font-size:14.6px;letter-spacing:0.47px;color:#9b9b9b;">ossim</div>
<div class="abs" style="left:668px;top:499.66px;width:81px;height:32.23px;overflow:hidden">
<div class="t" style="left:4.2px;top:4.74px;font-size:14.6px;letter-spacing:0.47px;color:#9b9b9b;">Hardware</div>
</div>
<div class="vl" style="left:667px;top:499.66px;height:32.23px;background:#eef1f2"></div>
<div class="vl" style="left:750px;top:499.66px;height:32.23px;background:#eef1f2"></div>
<div class="hl" style="left:0;top:531.90px;width:832px"></div>
<div class="abs" style="left:0;top:532.90px;width:832px;height:32.23px;background:#fff"></div>
<div class="cb" style="left:13.7px;top:541.80px;width:13.6px;height:13.4px"></div>
<div class="ex" style="left:121.8px;top:538.50px"><i></i><b></b></div>
<svg class="abs" style="left:136.1px;top:538.60px" width="19.6" height="17.5" viewBox="0 0 19.6 17.5"><rect x="1.200" y="1.200" width="11.600" height="15.100" rx="2.300" fill="none" stroke="#252d3d" stroke-width="2.400"/><path d="M1.200 0h15.400c1.800 0 3 1.200 3 3v1.300c0 1.800-1.200 3-3 3H1.200z" fill="#252d3d"/><rect x="3.200" y="3.200" width="8.800" height="2" fill="#fcfcfc"/><rect x="15" y="2.400" width="2.600" height="1.500" rx=".6" fill="#9aa0aa"/><rect x="3.300" y="8.700" width="7.500" height="6" fill="#252d3d"/><path d="M4.400 10.700h5.300M4.400 12.800h5.300" stroke="#fcfcfc" stroke-width=".9"/></svg>
<div class="t" style="left:156.2px;top:537.64px;font-size:14.6px;letter-spacing:0.43px;">Veem Monitor</div>
<div class="abs" style="left:668px;top:532.90px;width:81px;height:32.23px;overflow:hidden">
<div class="t" style="left:4.2px;top:4.74px;font-size:14.6px;letter-spacing:0.31px;">Software</div>
</div>
<div class="vl" style="left:667px;top:532.90px;height:32.23px;background:#eef1f2"></div>
<div class="vl" style="left:750px;top:532.90px;height:32.23px;background:#eef1f2"></div>
<div class="hl" style="left:0;top:565.13px;width:832px"></div>
<div class="abs" style="left:0;top:566.13px;width:832px;height:32.23px;background:#fbfbfb"></div>
<div class="cb" style="left:13.7px;top:575.03px;width:13.6px;height:13.4px"></div>
<div class="ex" style="left:99.3px;top:571.73px"><i></i><b></b></div>
<svg class="abs" style="left:115.0px;top:571.13px" width="15.6" height="18.2" viewBox="0 0 15.6 18.2"><path d="M3.600 1.200h5.300l5.500 5.300v8.100c0 1.500-.9 2.400-2.400 2.400H3.600c-1.500 0-2.400-.9-2.400-2.400V3.600c0-1.500.9-2.400 2.400-2.400z" fill="none" stroke="#252d3d" stroke-width="2.300"/><path d="M8.700 1.400v5.300H14z" fill="#252d3d"/><path d="M4.200 10h7.500M4.200 13.600h5" stroke="#252d3d" stroke-width="1.900" fill="none"/></svg>
<div class="t" style="left:133.7px;top:570.87px;font-size:14.6px;letter-spacing:-0.39px;color:#9b9b9b;">Recurso ABCDE</div>
<div class="abs" style="left:668px;top:566.13px;width:81px;height:32.23px;overflow:hidden">
<div class="t" style="left:4.2px;top:4.74px;font-size:14.6px;letter-spacing:0.64px;color:#9b9b9b;">Información</div>
</div>
<div class="vl" style="left:667px;top:566.13px;height:32.23px;background:#eef1f2"></div>
<div class="vl" style="left:750px;top:566.13px;height:32.23px;background:#eef1f2"></div>
<div class="hl" style="left:0;top:598.36px;width:832px"></div>
<div class="abs" style="left:0;top:599.36px;width:832px;height:32.23px;background:#fff"></div>
<div class="cb" style="left:13.7px;top:608.26px;width:13.6px;height:13.4px"></div>
<div class="ex" style="left:99.3px;top:604.96px"><i></i><b></b></div>
<svg class="abs" style="left:116.9px;top:605.46px" width="12.3" height="18.4" viewBox="0 0 12.3 18.4"><rect x="1.200" y="1.200" width="9.900" height="16" rx="2.400" fill="none" stroke="#252d3d" stroke-width="2.400"/><path d="M4.300 4.500h3.700M4.300 6.700h3.700" stroke="#252d3d" stroke-width="1.300"/><path d="M6.150 9.800v4" stroke="#252d3d" stroke-width="1.900"/></svg>
<div class="t" style="left:133.7px;top:604.11px;font-size:14.6px;letter-spacing:0.02px;color:#9b9b9b;">Servidor de BBDD de Prueba</div>
<div class="abs" style="left:668px;top:599.36px;width:81px;height:32.23px;overflow:hidden">
<div class="t" style="left:4.2px;top:4.74px;font-size:14.6px;letter-spacing:0.47px;color:#9b9b9b;">Hardware</div>
</div>
<div class="vl" style="left:667px;top:599.36px;height:32.23px;background:#eef1f2"></div>
<div class="vl" style="left:750px;top:599.36px;height:32.23px;background:#eef1f2"></div>
<div class="hl" style="left:0;top:631.60px;width:832px"></div>
<div class="abs" style="left:0;top:632.60px;width:832px;height:32.23px;background:#fbfbfb"></div>
<div class="cb" style="left:13.7px;top:641.50px;width:13.6px;height:13.4px"></div>
<div class="ex" style="left:76.7px;top:638.20px"><i></i><b></b></div>
<svg class="abs" style="left:91.2px;top:637.50px" width="19.5" height="19.1" viewBox="0 0 19.5 19.1"><g fill="#252d3d" stroke="#252d3d"><path d="M9.750 2v4M5.300 9.500L9.750 6l4.450 3.500M5.300 9.500L2 17M5.300 9.500L8.600 17M14.200 9.500L10.900 17M14.200 9.500L17.500 17" fill="none" stroke-width="2"/><circle cx="9.750" cy="2.300" r="2.200" stroke="none"/><circle cx="5.300" cy="10.200" r="2.500" stroke="none"/><circle cx="14.200" cy="10.200" r="2.500" stroke="none"/><circle cx="2.300" cy="16.800" r="2.300" stroke="none"/><circle cx="8.300" cy="16.800" r="2.300" stroke="none"/><circle cx="11.200" cy="16.800" r="2.300" stroke="none"/><circle cx="17.200" cy="16.800" r="2.300" stroke="none"/></g></svg>
<div class="t" style="left:111.1px;top:637.34px;font-size:14.6px;">Proceso C</div>
<div class="abs" style="left:668px;top:632.60px;width:81px;height:32.23px;overflow:hidden">
<div class="t" style="left:4.2px;top:4.74px;font-size:14.6px;letter-spacing:0.12px;">Procesos</div>
</div>
<div class="vl" style="left:667px;top:632.60px;height:32.23px;background:#eef1f2"></div>
<div class="vl" style="left:750px;top:632.60px;height:32.23px;background:#eef1f2"></div>
<div class="hl" style="left:0;top:664.83px;width:832px"></div>
<div class="abs" style="left:0;top:665.83px;width:832px;height:32.23px;background:#fff"></div>
<div class="cb" style="left:13.7px;top:674.73px;width:13.6px;height:13.4px"></div>
<div class="ex" style="left:76.7px;top:671.43px"><i></i><b></b></div>
<svg class="abs" style="left:91.2px;top:670.73px" width="19.5" height="19.1" viewBox="0 0 19.5 19.1"><g fill="#252d3d" stroke="#252d3d"><path d="M9.750 2v4M5.300 9.500L9.750 6l4.450 3.500M5.300 9.500L2 17M5.300 9.500L8.600 17M14.200 9.500L10.900 17M14.200 9.500L17.500 17" fill="none" stroke-width="2"/><circle cx="9.750" cy="2.300" r="2.200" stroke="none"/><circle cx="5.300" cy="10.200" r="2.500" stroke="none"/><circle cx="14.200" cy="10.200" r="2.500" stroke="none"/><circle cx="2.300" cy="16.800" r="2.300" stroke="none"/><circle cx="8.300" cy="16.800" r="2.300" stroke="none"/><circle cx="11.200" cy="16.800" r="2.300" stroke="none"/><circle cx="17.200" cy="16.800" r="2.300" stroke="none"/></g></svg>
<div class="t" style="left:111.1px;top:670.57px;font-size:14.6px;letter-spacing:-0.32px;">Proceso E</div>
<div class="abs" style="left:668px;top:665.83px;width:81px;height:32.23px;overflow:hidden">
<div class="t" style="left:4.2px;top:4.74px;font-size:14.6px;letter-spacing:0.12px;">Procesos</div>
</div>
<div class="vl" style="left:667px;top:665.83px;height:32.23px;background:#eef1f2"></div>
<div class="vl" style="left:750px;top:665.83px;height:32.23px;background:#eef1f2"></div>
<div class="hl" style="left:0;top:698.06px;width:832px"></div>
<div class="abs" style="left:0;top:699.06px;width:832px;height:32.23px;background:#fbfbfb"></div>
<div class="cb" style="left:13.7px;top:707.96px;width:13.6px;height:13.4px"></div>
<div class="ex" style="left:76.7px;top:704.66px"><i></i><b></b></div>
<svg class="abs" style="left:91.2px;top:703.96px" width="19.5" height="19.1" viewBox="0 0 19.5 19.1"><g fill="#252d3d" stroke="#252d3d"><path d="M9.750 2v4M5.300 9.500L9.750 6l4.450 3.500M5.300 9.500L2 17M5.300 9.500L8.600 17M14.200 9.500L10.900 17M14.200 9.500L17.500 17" fill="none" stroke-width="2"/><circle cx="9.750" cy="2.300" r="2.200" stroke="none"/><circle cx="5.300" cy="10.200" r="2.500" stroke="none"/><circle cx="14.200" cy="10.200" r="2.500" stroke="none"/><circle cx="2.300" cy="16.800" r="2.300" stroke="none"/><circle cx="8.300" cy="16.800" r="2.300" stroke="none"/><circle cx="11.200" cy="16.800" r="2.300" stroke="none"/><circle cx="17.200" cy="16.800" r="2.300" stroke="none"/></g></svg>
<div class="t" style="left:111.1px;top:703.80px;font-size:14.6px;letter-spacing:-0.22px;">Proceso F</div>
<div class="abs" style="left:668px;top:699.06px;width:81px;height:32.23px;overflow:hidden">
<div class="t" style="left:4.2px;top:4.74px;font-size:14.6px;letter-spacing:0.12px;">Procesos</div>
</div>
<div class="vl" style="left:667px;top:699.06px;height:32.23px;background:#eef1f2"></div>
<div class="vl" style="left:750px;top:699.06px;height:32.23px;background:#eef1f2"></div>
<div class="hl" style="left:0;top:731.30px;width:832px"></div>
<div class="abs" style="left:0;top:732.30px;width:832px;height:32.23px;background:#fff"></div>
<div class="cb" style="left:13.7px;top:741.20px;width:13.6px;height:13.4px"></div>
<div class="ex" style="left:54.2px;top:737.90px"><i></i><b></b></div>
<svg class="abs" style="left:68.3px;top:738.20px" width="18.8" height="18.9" viewBox="0 0 18.8 18.9"><g fill="none" stroke="#252d3d"><path d="M1 5V3c0-1.200.8-2 2-2h2M13.800 1h2c1.200 0 2 .8 2 2v2M17.800 13.900v2c0 1.200-.8 2-2 2h-2M5 17.900H3c-1.200 0-2-.8-2-2v-2" stroke-width="2" stroke-linecap="round"/><path d="M9.400 3.300l5.300 2.900v6.500l-5.300 2.900-5.300-2.900V6.200z" stroke-width="2"/><path d="M4.300 6.400l5.100 3 5.100-3M9.400 9.400v6" stroke-width="1.800"/></g></svg>
<div class="t" style="left:88.6px;top:737.04px;font-size:14.6px;letter-spacing:0.22px;">Producto 2</div>
<div class="abs" style="left:668px;top:732.30px;width:81px;height:32.23px;overflow:hidden">
<div class="t" style="left:4.2px;top:4.74px;font-size:14.6px;letter-spacing:0.10px;">Servicios</div>
</div>
<div class="vl" style="left:667px;top:732.30px;height:32.23px;background:#eef1f2"></div>
<div class="vl" style="left:750px;top:732.30px;height:32.23px;background:#eef1f2"></div>
</div>
<div class="abs" style="left:1852px;top:252px;width:18px;height:770px;background:#fafafa"></div>
<svg class="abs" style="left:1856.5px;top:260px" width="10" height="7" viewBox="0 0 10 7"><path d="M0 7L5 0l5 7z" fill="#8a8a8a"/></svg>
<svg class="abs" style="left:1856.5px;top:1009.5px" width="10" height="7" viewBox="0 0 10 7"><path d="M0 0L5 7l5-7z" fill="#6a6a6a"/></svg>
<div class="abs" style="left:1856.0px;top:581px;width:11px;height:402px;border-radius:5.5px;background:#8b8b8b"></div>
<div class="abs" style="left:152px;top:108px;width:352px;height:68px;background:#d4dcde;border:1px solid #a9c3df;border-radius:0 0 4px 4px;box-shadow:1px 2px 4px rgba(0,0,0,.18)"></div>
<div class="abs" style="left:153px;top:112px;width:350px;height:1px;background:#fff"></div>
<div class="abs" style="left:153px;top:142px;width:350px;height:1px;background:#fff"></div>
<div class="abs" style="left:157px;top:115px"><svg width="22" height="22" viewBox="0 0 22 22" fill="none" stroke="#333b4b"><path d="M1.500 1.500v17c0 1 .6 1.600 1.600 1.600H17" stroke-width="2.300"/><path d="M6 1v13.500c0 1 .6 1.600 1.600 1.600h11c1 0 1.600-.6 1.600-1.600V3.600c0-1-.6-1.600-1.600-1.600H11" stroke-width="2.300"/><path d="M9.500 7.500h7.500M9.500 11h5" stroke-width="2.100"/></svg></div>
<div class="abs" style="left:157px;top:145px"><svg width="22" height="22" viewBox="0 0 22 22" fill="none" stroke="#333b4b"><path d="M1.500 1.500v17c0 1 .6 1.600 1.600 1.600H17" stroke-width="2.300"/><path d="M6 1v13.500c0 1 .6 1.600 1.600 1.600h11c1 0 1.600-.6 1.600-1.600V3.600c0-1-.6-1.600-1.600-1.600H11" stroke-width="2.300"/><path d="M9.500 7.500h7.500M9.500 11h5" stroke-width="2.100"/></svg></div>
<div class="t" style="left:187.6px;top:114.66px;font-size:15.4px;letter-spacing:0.25px;color:#2a3244;">Copiar a elemento/s seleccionado/s</div>
<div class="t" style="left:187.6px;top:144.66px;font-size:15.4px;letter-spacing:0.18px;color:#2a3244;">Copiar a elementos de la misma categoría</div>
</body></html>
